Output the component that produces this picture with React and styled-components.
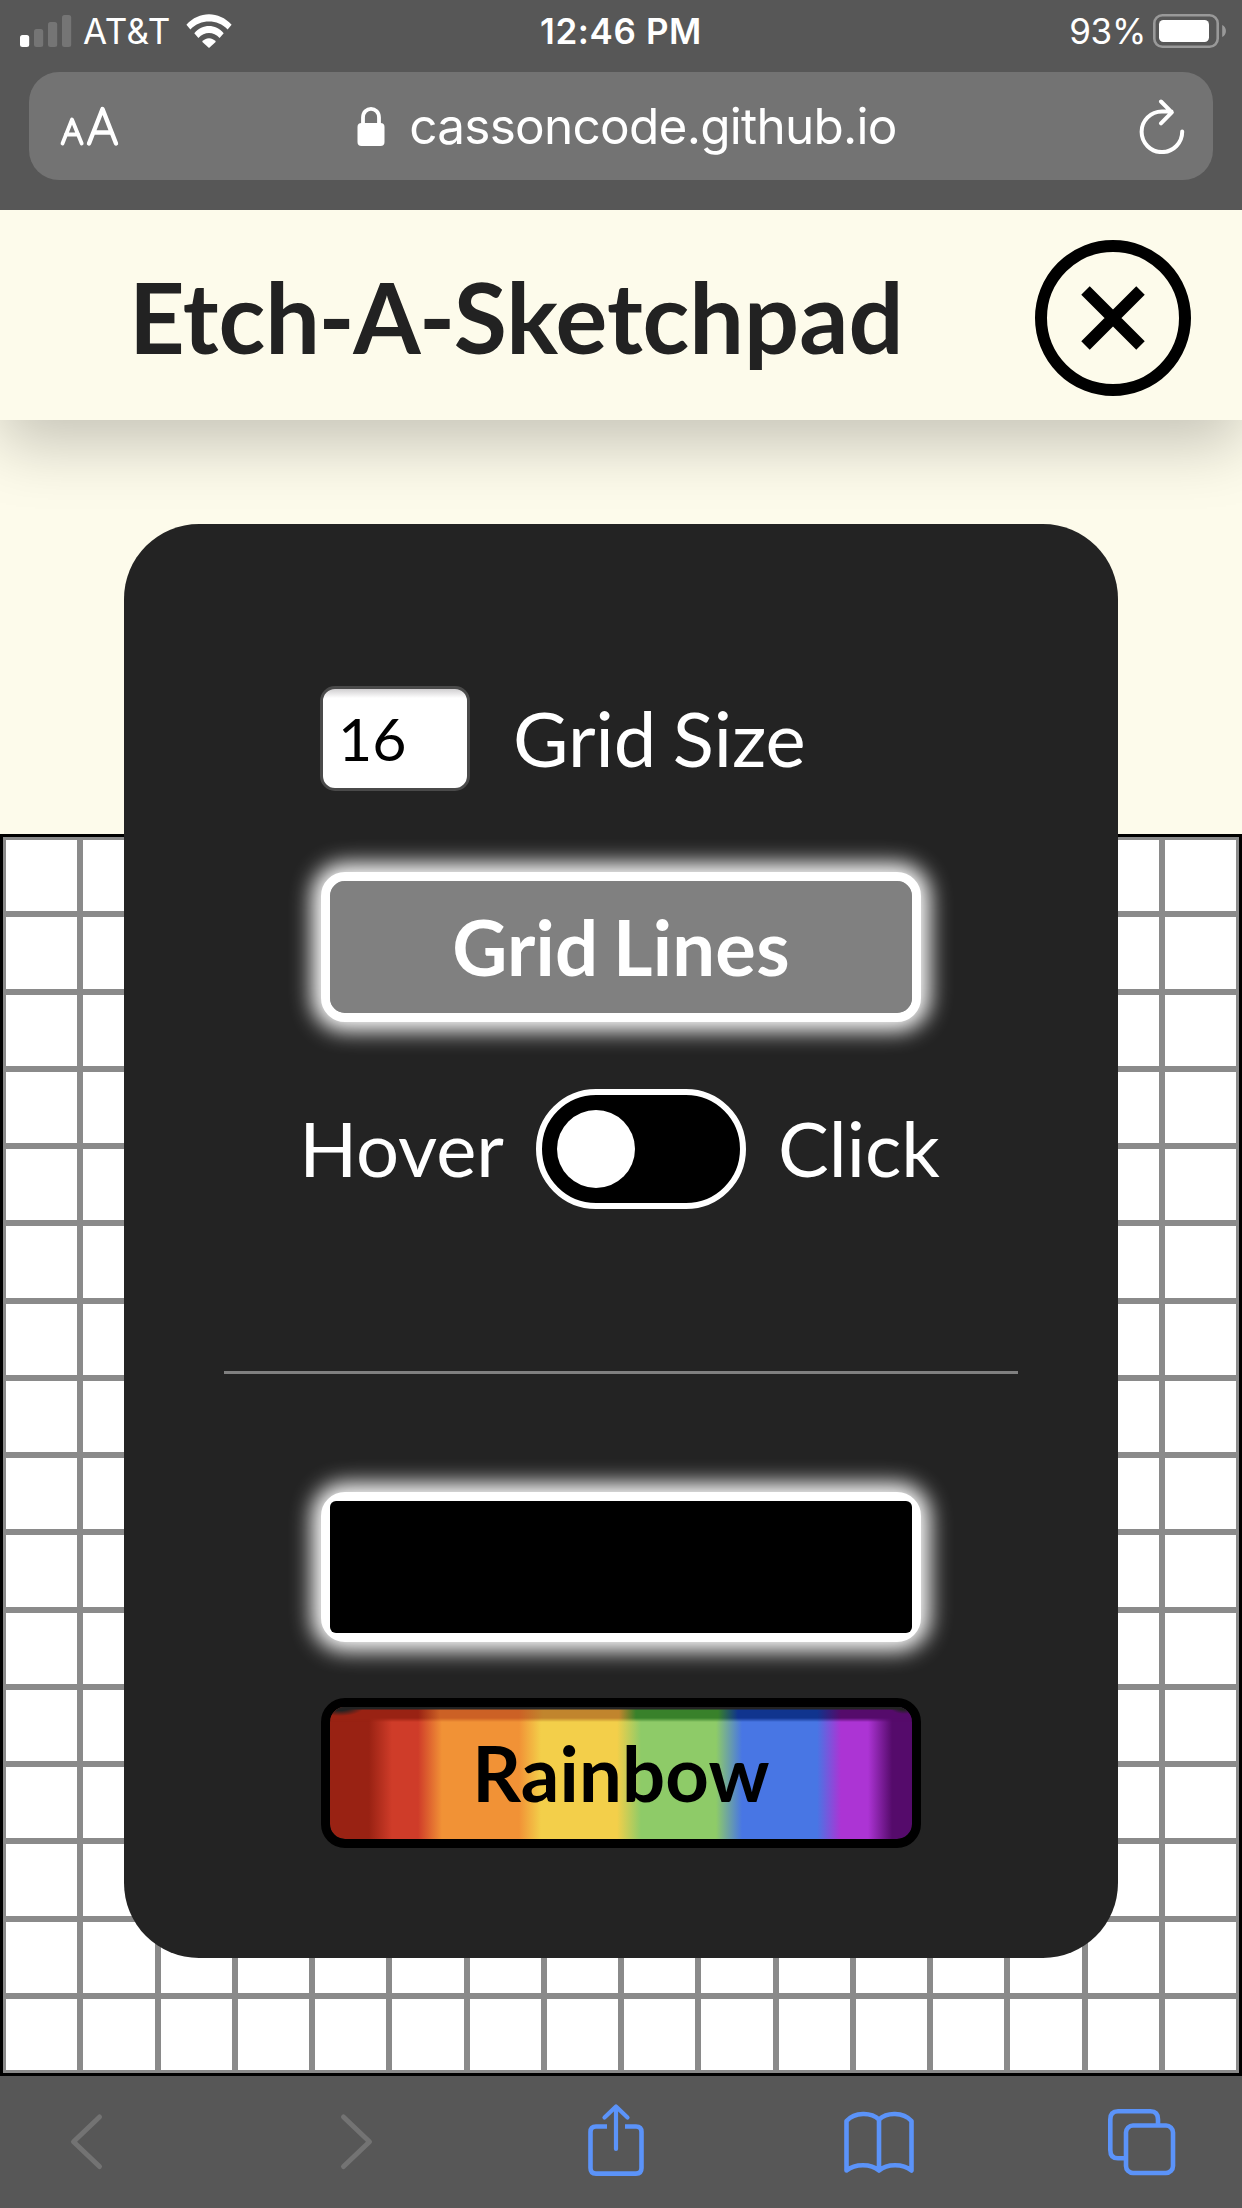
import React from "react";
import styled, { createGlobalStyle } from "styled-components";

const GlobalStyle = createGlobalStyle`
  *, *::before, *::after { box-sizing: border-box; }
  body { margin: 0; background: #fdfbeb; font-family: Lato, "Liberation Sans", sans-serif; }
  svg { display: block; flex: none; }
`;

const Screen = styled.div`
  width: 1242px;
  height: 2208px;
  display: flex;
  flex-direction: column;
  overflow: hidden;
  background: #fdfbeb;
`;

const BrowserTop = styled.div`
  position: relative;
  z-index: 3;
  height: 210px;
  flex: none;
  background: #575757;
  color: #fff;
  font-family: Inter, Roboto, sans-serif;
`;

const StatusBar = styled.div`
  display: grid;
  grid-template-columns: 1fr auto 1fr;
  align-items: center;
  height: 72px;
  padding: 0 15px 10px 20px;
`;

const StatusSide = styled.div`
  display: flex;
  align-items: center;
  justify-content: ${(p) => (p.$end ? "flex-end" : "flex-start")};
`;

const StatusText = styled.span`
  font-size: 35px;
  line-height: 44px;
  font-weight: ${(p) => p.$weight || 400};
  letter-spacing: ${(p) => p.$spacing || 0}px;
  margin: ${(p) => p.$margin || "0"};
  white-space: nowrap;
`;

const AddressBar = styled.div`
  display: flex;
  align-items: center;
  justify-content: space-between;
  height: 108px;
  margin: 0 29px;
  padding: 0 27px 0 31px;
  border-radius: 30px;
  background: #737373;
`;

const Address = styled.div`
  display: flex;
  align-items: center;
  gap: 24px;
  margin-right: 4px;
  font-size: 49.5px;
  line-height: 60px;
  letter-spacing: -0.75px;
`;

const Header = styled.header`
  position: relative;
  z-index: 2;
  display: flex;
  align-items: center;
  justify-content: space-between;
  flex: none;
  height: 210px;
  padding: 6px 51px 0 129px;
  background: #fdfbeb;
  box-shadow: 0 24px 60px rgba(0, 0, 0, 0.22);
`;

const Title = styled.h1`
  margin: 0 0 3px;
  color: #222;
  font-size: 97px;
  line-height: 116px;
  font-weight: 700;
  white-space: nowrap;
`;

const Hyphen = styled.span`
  margin: 0 -1.5px;
`;

const CloseButton = styled.button`
  display: flex;
  width: 156px;
  height: 156px;
  padding: 0;
  border: 0;
  background: none;
`;

const Main = styled.main`
  display: grid;
  grid-template: 1656px / 1242px;
  flex: none;
  height: 1656px;
`;

const Canvas = styled.div`
  grid-area: 1 / 1;
  align-self: end;
  display: grid;
  grid-template: repeat(16, 77.25px) / repeat(16, 77.25px);
  border: 3px solid #000;
  background: #8a8a8a;
`;

const Cell = styled.div`
  border: 3px solid #8a8a8a;
  background: #fff;
`;

const Panel = styled.section`
  grid-area: 1 / 1;
  z-index: 1;
  display: flex;
  flex-direction: column;
  align-items: center;
  width: 994px;
  height: 1434px;
  margin: 104px 0 0 124px;
  padding-top: 162px;
  border-radius: 75px;
  background: #232323;
  color: #fff;
`;

const SizeRow = styled.label`
  display: flex;
  align-items: center;
  gap: 43px;
  width: 600px;
  height: 105px;
  font-size: 76px;
  line-height: 90px;
  word-spacing: -3px;
`;

const SizeText = styled.span`
  margin-bottom: 2px;
`;

const SizeInput = styled.input`
  width: 150px;
  height: 105px;
  margin-left: -1px;
  padding: 0 0 0 15px;
  border: 3px solid #4a4a4a;
  border-radius: 15px;
  outline: 0;
  background: linear-gradient(#d0ced0, #fff 9px);
  color: #000;
  font: 400 59px/90px Lato, sans-serif;
`;

const PanelButton = styled.button`
  position: relative;
  display: flex;
  align-items: center;
  justify-content: center;
  flex: none;
  width: 600px;
  height: 150px;
  margin-top: ${(p) => p.$top}px;
  padding: 0;
  border: 9px solid ${(p) => p.$border};
  border-radius: 24px;
  background: ${(p) => p.$fill};
  background-clip: padding-box;
  box-shadow: ${(p) => (p.$active ? "0 0 21px 9px #fff" : "none")};
  color: ${(p) => p.$color};
  font: 700 76px/90px Lato, sans-serif;
  letter-spacing: 0.2px;
  word-spacing: -4px;
`;

const BlackSwatch = styled(PanelButton)`
  background: #fff;

  &::before {
    content: "";
    width: 582px;
    height: 132px;
    border-radius: 6px;
    background: #000;
    flex: none;
  }
`;

const RainbowButton = styled(PanelButton)`
  overflow: hidden;
  background:
    linear-gradient(90deg, #992213 39px, #cf3c29 62px 88px, #f19236 112px 189px, #f3cf4a 211px 287px,
      #8ecb68 311px 386px, #4876e4 412px 487px, #ac34d4 511px 538px, #550b6b 562px) padding-box;

  &::before {
    content: "";
    position: absolute;
    inset: 0 0 auto;
    height: 15px;
    background: linear-gradient(90deg, #992213 88px, #cc6125 110px 189px, #c1852d 213px 289px,
      #38812a 306px 388px, #10348e 408px 487px, #550b6b 511px);
    mask-image: linear-gradient(#000 11px, transparent 15px);
  }

  &::after {
    content: "";
    position: absolute;
    inset: 0 0 auto;
    height: 10px;
    background:
      radial-gradient(24px 9px at 10px 0, #222 40%, transparent),
      radial-gradient(14px 7px at 574px 0, #222 40%, transparent),
      linear-gradient(#222 1.5px, transparent 3.5px);
  }
`;

const ButtonLabel = styled.span`
  position: relative;
`;

const ToggleRow = styled.div`
  display: flex;
  align-items: center;
  justify-content: center;
  gap: 32px;
  height: 120px;
  margin: 67px 3px 0 0;
  font-size: 76px;
  line-height: 90px;
`;

const ToggleLabel = styled.span`
  margin-bottom: 2px;
`;

const Toggle = styled.div`
  display: flex;
  align-items: center;
  width: 210px;
  height: 120px;
  padding-left: 15px;
  border: 6px solid #fff;
  border-radius: 60px;
  background: #000;
`;

const Knob = styled.div`
  width: 78px;
  height: 78px;
  border-radius: 50%;
  background: #fff;
`;

const Divider = styled.hr`
  width: 794px;
  height: 3px;
  margin: 162px 0 0;
  border: 0;
  background: #808080;
`;

const BrowserBottom = styled.nav`
  position: relative;
  z-index: 2;
  display: flex;
  justify-content: space-between;
  flex: none;
  height: 132px;
  padding: 0 60px 0 46px;
  background: #575757;
`;

const ToolIcon = ({ dim, children }) => (
  <svg
    width="80"
    height="132"
    viewBox="0 0 80 132"
    fill="none"
    stroke={dim ? "#737373" : "#5b93f9"}
    strokeWidth={dim ? 5 : 4.6}
    strokeLinecap="round"
    strokeLinejoin="round"
  >
    {children}
  </svg>
);

const Signal = () => (
  <svg width="52" height="34" viewBox="0 0 52 34" fill="#757575">
    <rect x="0" y="21" width="9.2" height="12" rx="2.5" fill="#fff" />
    <rect x="14" y="15" width="9.2" height="18" rx="2.5" />
    <rect x="28" y="8" width="9.2" height="25" rx="2.5" />
    <rect x="42" y="1" width="9.2" height="32" rx="2.5" />
  </svg>
);

const Wifi = () => (
  <svg width="46" height="34" viewBox="0 0 46 34" fill="#fff">
    <path d="M.4 10.8C13-3.2 33-3.2 45.600 10.800L41.600 15.400C31.500 4.800 14.500 4.800 4.400 15.400Z" />
    <path d="M8.300 19.300C16.500 9.700 29.500 9.700 37.700 19.300L33.600 24C27.500 17.300 18.500 17.300 12.400 24Z" />
    <path d="M16.100 27.800C19.500 23 26.500 23 29.900 27.800L23 34Z" />
  </svg>
);

const Battery = () => (
  <svg width="74" height="34" viewBox="0 0 74 34">
    <rect x="1.300" y="1.300" width="63.400" height="31.400" rx="8" fill="none" stroke="#999" strokeWidth="2.600" />
    <rect x="6" y="6" width="50" height="22" rx="4.500" fill="#fff" />
    <path d="M69.200 11C74.200 13.200 74.200 20.800 69.200 23Z" fill="#999" />
  </svg>
);

const TextSize = () => (
  <svg width="60" height="42" viewBox="0 0 60 42" fill="none" stroke="#fff" strokeLinecap="round" strokeLinejoin="round">
    <path d="M2.500 38.500L12 14.500L21.700 38.500M5.800 29.500H18.300" strokeWidth="3.800" />
    <path d="M29 38.500L42.500 4L56 38.500M33.600 27.500H51.400" strokeWidth="4.400" />
  </svg>
);

const Lock = () => (
  <svg width="28" height="42" viewBox="0 0 28 42">
    <rect x="0.500" y="18" width="27" height="23" rx="4" fill="#fff" />
    <path d="M6 19V12.500C6 1 22 1 22 12.500V19" fill="none" stroke="#fff" strokeWidth="3.800" />
  </svg>
);

const Reload = () => (
  <svg width="48" height="56" viewBox="0 0 48 56" fill="none" stroke="#fff" strokeWidth="4" strokeLinecap="round" strokeLinejoin="round">
    <path d="M44.200 33.500A20.300 20.300 0 1 1 24 13.500H33.500M23 3.500L33.800 14.300L23 25.300" />
  </svg>
);

const cells = Array.from({ length: 256 }, (_, i) => i);

export default function App() {
  return (
    <Screen>
      <GlobalStyle />
      <BrowserTop>
        <StatusBar>
          <StatusSide>
            <Signal />
            <StatusText $margin="0 15px 0 11px" $spacing={0.5}>AT&amp;T</StatusText>
            <Wifi />
          </StatusSide>
          <StatusText $weight={600} $spacing={0.6} $margin="0 5px 0 0">12:46 PM</StatusText>
          <StatusSide $end>
            <StatusText $margin="0 7px 0 0" $spacing={-0.3}>93%</StatusText>
            <Battery />
          </StatusSide>
        </StatusBar>
        <AddressBar>
          <TextSize />
          <Address>
            <Lock />
            <span>cassoncode.github.io</span>
          </Address>
          <Reload />
        </AddressBar>
      </BrowserTop>
      <Header>
        <Title>
          Etch<Hyphen>-</Hyphen>A<Hyphen>-</Hyphen>Sketchpad
        </Title>
        <CloseButton aria-label="Close">
          <svg width="156" height="156" viewBox="0 0 156 156" fill="none" stroke="#000" strokeWidth="12">
            <circle cx="78" cy="78" r="72" />
            <path d="M50.500 50.500L105.500 105.500M105.500 50.500L50.500 105.500" />
          </svg>
        </CloseButton>
      </Header>
      <Main>
        <Canvas>
          {cells.map((i) => (
            <Cell key={i} />
          ))}
        </Canvas>
        <Panel>
          <SizeRow>
            <SizeInput defaultValue="16" />
            <SizeText>Grid Size</SizeText>
          </SizeRow>
          <PanelButton $top={81} $border="#fff" $fill="#808080" $color="#fff" $active>
            Grid Lines
          </PanelButton>
          <ToggleRow>
            <ToggleLabel>Hover</ToggleLabel>
            <Toggle>
              <Knob />
            </Toggle>
            <ToggleLabel>Click</ToggleLabel>
          </ToggleRow>
          <Divider />
          <BlackSwatch $top={118} $border="#fff" $active aria-label="Black" />
          <RainbowButton $top={56} $border="#000" $color="#000">
            <ButtonLabel>Rainbow</ButtonLabel>
          </RainbowButton>
        </Panel>
      </Main>
      <BrowserBottom>
        <ToolIcon dim>
          <path d="M53.500 41L27.500 65.700L53.500 90.500" />
        </ToolIcon>
        <ToolIcon dim>
          <path d="M33.500 41L59.500 65.700L33.500 90.500" />
        </ToolIcon>
        <ToolIcon>
          <path d="M33 50.500H22Q16.500 50.500 16.500 56V92Q16.500 97.600 22 97.600H62Q67.500 97.600 67.500 92V56Q67.500 50.500 62 50.500H51" strokeLinecap="butt" />
          <path d="M42 73V31M30.500 41.500L42 30.500L53.500 41.500" strokeWidth="4.200" />
        </ToolIcon>
        <ToolIcon>
          <path d="M41 43.500C33 36 17 36 8.500 45V94.500C17 87.500 33 87.500 41 94.500C49 87.500 65 87.500 73.500 94.500V45C65 36 49 36 41 43.500ZM41 43.500V94.500" />
        </ToolIcon>
        <ToolIcon>
          <path d="M23.500 82.300H16Q8.300 82.300 8.300 74V43.500Q8.300 35.300 16 35.300H48.500Q56 35.300 56 43.500V49" strokeLinecap="butt" />
          <rect x="24" y="49.500" width="47" height="47.500" rx="7" />
        </ToolIcon>
      </BrowserBottom>
    </Screen>
  );
}
